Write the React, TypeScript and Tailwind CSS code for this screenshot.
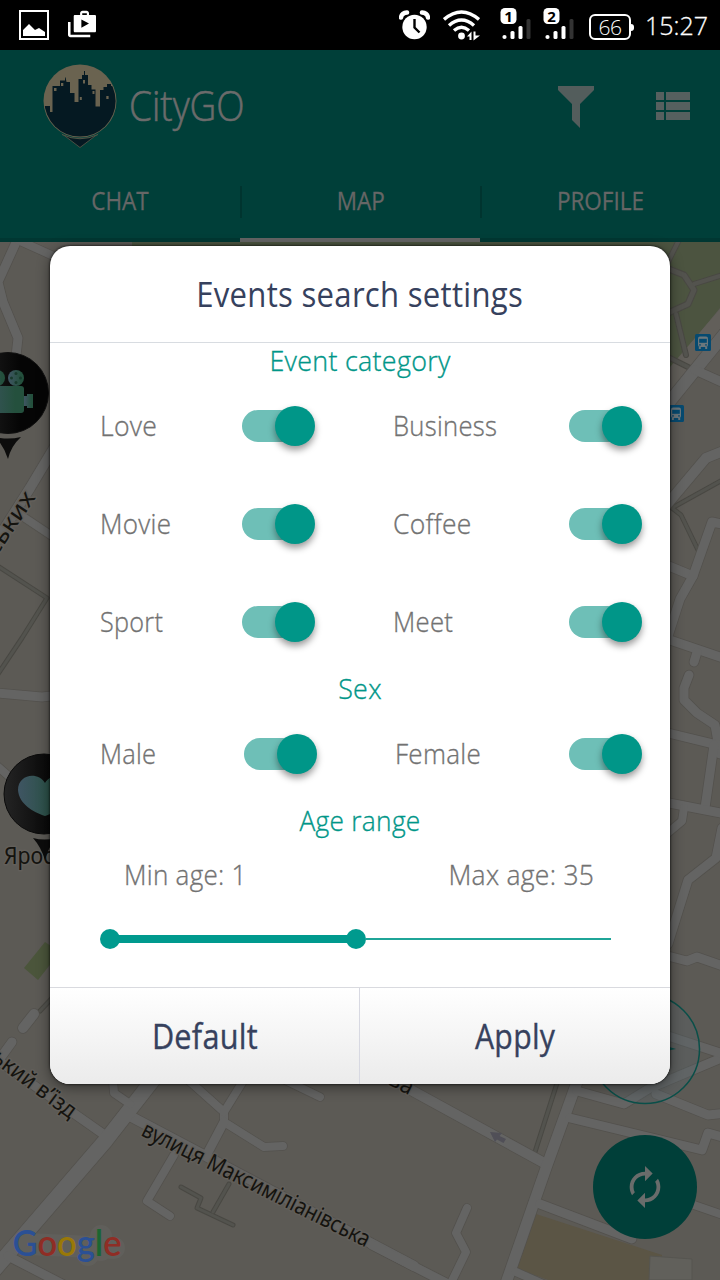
import { MdAutorenew } from "react-icons/md";

/* ---------- Map ---------- */

const roads: [string, number][] = [
  ["M18 238 L-2 282 L3 302 L18 338 L15 365", 9],
  ["M18 240 L60 259", 8],
  ["M54 448 L30 488 L-6 545", 10],
  ["M22 516 L55 538", 8],
  ["M-4 693 L42 697 L60 695", 9],
  ["M-4 765 L12 779", 8],
  ["M34 1014 L23 1028", 10],
  ["M12 1042 L-4 1064", 9],
  ["M-8 1056 L106 1136", 9],
  ["M126 1114 L414 1266", 10],
  ["M156 1076 L106 1140 L-6 1270", 15],
  ["M113 1080 L114 1093 L130 1104", 8],
  ["M186 1078 L224 1112 L224 1122 L264 1147 L283 1146", 8],
  ["M245 1078 L224 1112", 8],
  ["M224 1122 L206 1156", 9],
  ["M174 1155 L147 1201 L170 1216", 8],
  ["M285 1080 L320 1097", 8],
  ["M8 1256 L66 1286", 9],
  ["M400 1084 L546 1164", 10],
  ["M577 1082 L546 1168 L505 1286", 11],
  ["M577 1091 L624 1104 L650 1088 L726 1056", 9],
  ["M656 1094 L708 1115 L726 1113", 9],
  ["M570 1118 L702 1150 L708 1133 L726 1138", 9],
  ["M668 1036 L726 1055", 9],
  ["M540 1204 L632 1239", 9],
  ["M694 1205 L726 1216", 8],
  ["M372 1245 L454 1287", 9],
  ["M467 1208 L456 1233 L466 1252 L450 1285", 8],
  ["M516 1272 L550 1287", 8],
  ["M726 332 L666 406", 12],
  ["M695 370 L726 384", 9],
  ["M664 508 L706 458 L726 450", 10],
  ["M664 564 L693 576", 9],
  ["M726 525 L712 522 L693 576 L680 599 L668 636", 9],
  ["M664 638 L726 659", 9],
  ["M697 652 L694 662", 9],
  ["M689 675 L684 688 L684 700 L697 713 L715 725 L720 754", 9],
  ["M664 732 L726 747", 9],
  ["M714 745 L705 808", 9],
  ["M664 802 L726 814", 9],
  ["M684 808 L682 821 L664 836", 8],
  ["M722 828 L716 858 L688 880 L668 944", 9],
  ["M664 955 L687 961 L697 957 L726 967", 9],
];

const paths: [string, number][] = [
  ["M-4 565 L47 598 L22 638 L-6 680", 4],
  ["M54 996 L40 1011", 4],
  ["M181 1187 L201 1198 L197 1208 L233 1225", 4],
  ["M229 1184 L213 1212", 4],
  ["M558 1080 L535 1152", 4],
  ["M726 478 L672 508 L681 515 L698 550", 4],
  ["M666 268 L684 275 L694 290 L688 304 L666 314", 6],
  ["M694 284 L726 274", 5],
  ["M680 238 L668 262", 5],
  ["M676 314 L686 355", 5],
  ["M664 355 L692 369", 5],
];

function BusStop({ x, y }: { x: number; y: number }) {
  return (
    <g transform={`translate(${x} ${y})`}>
      <rect width="16" height="17" rx="1.5" fill="#064a70" />
      <rect x="3" y="2.5" width="10" height="10.5" rx="2" fill="#6c777c" />
      <rect x="4.2" y="4.8" width="7.6" height="4" fill="#064a70" />
      <rect x="4.2" y="10.2" width="1.6" height="1.4" fill="#064a70" />
      <rect x="10.2" y="10.2" width="1.6" height="1.4" fill="#064a70" />
      <rect x="3.8" y="13" width="2" height="2" fill="#6c777c" />
      <rect x="10.2" y="13" width="2" height="2" fill="#6c777c" />
    </g>
  );
}

function MapView() {
  return (
    <svg className="absolute inset-0" width="720" height="1280" viewBox="0 0 720 1280">
      <defs>
        <linearGradient id="pin" x1="0" x2="1">
          <stop offset="0" stopColor="#242424" />
          <stop offset="0.65" stopColor="#050505" />
        </linearGradient>
        <linearGradient id="mint" x1="0" x2="1">
          <stop offset="0" stopColor="#3f5563" />
          <stop offset="0.8" stopColor="#24503d" />
        </linearGradient>
      </defs>
      <rect width="720" height="1280" fill="#5c5a55" />
      <path d="M132 240 H720 V308 L664 376 V250 H132 Z" fill="#4c5440" />
      <path d="M664 374 L726 302 V340 L664 414 Z" fill="#625f5a" />
      <path d="M24 968 L45 942 L60 952 L38 980 Z" fill="#4b553b" />
      <path d="M536 1214 L662 1255 L660 1280 H548 L516 1268 Z" fill="#5b5545" />
      <g fill="none" strokeLinejoin="round" strokeLinecap="round">
        {paths.map(([d, w]) => <path key={d} d={d} stroke="#494843" strokeWidth={w + 1} />)}
        {paths.map(([d, w]) => <path key={d} d={d} stroke="#53534e" strokeWidth={w - 1} />)}
        {roads.map(([d, w]) => <path key={d} d={d} stroke="#53514d" strokeWidth={w + 1.5} />)}
        {roads.map(([d, w]) => <path key={d} d={d} stroke="#646463" strokeWidth={w} />)}
      </g>
      <path d="M650 1256 L692 1259 V1280 H649 Z" fill="#61605b" stroke="#565550" />
      <path d="M490 1132 L502 1133 L499.500 1136 L506 1139 L503.500 1143 L497 1139.500 L495 1142 Z" fill="#504f57" />
      <BusStop x={695} y={334} />
      <BusStop x={668} y={405} />

      <circle cx="8" cy="393" r="40.500" fill="url(#pin)" stroke="#111" />
      <path d="M-5 437 Q8 440 21 437 Q11 446 8 459 Q4 446 -5 437" fill="#0c0c0c" />
      <g fill="url(#mint)">
        <circle cx="-3" cy="378" r="8" />
        <circle cx="16" cy="378" r="8" />
        <rect x="-20" y="386" width="44" height="27" rx="3" />
        <path d="M24 396 H27 V394 H33 V408 H27 V406 H24 Z" />
      </g>
      <g fill="#183a2c">
        <circle cx="16" cy="373.500" r="1.500" />
        <circle cx="16" cy="382.500" r="1.500" />
        <circle cx="11.500" cy="378" r="1.500" />
        <circle cx="20.500" cy="378" r="1.500" />
      </g>

      <g fontFamily="'Noto Sans', 'Open Sans', sans-serif" fontSize="23" fontWeight="450" fill="#14130f" stroke="#625f5a" strokeWidth="3" paintOrder="stroke" strokeLinejoin="round">
        <text transform="translate(-12 569) rotate(-56)" textLength="86" lengthAdjust="spacingAndGlyphs">вських</text>
        <text x="4" y="864" textLength="74" lengthAdjust="spacingAndGlyphs">Яросла</text>
        <text transform="translate(-9 1061) rotate(36.500)" textLength="98" lengthAdjust="spacingAndGlyphs">ький в’їзд</text>
        <text transform="translate(140 1135) rotate(26.500)" textLength="252" lengthAdjust="spacingAndGlyphs">вулиця Максиміліанівська</text>
        <text transform="translate(387 1084) rotate(27)" textLength="25" lengthAdjust="spacingAndGlyphs">ва</text>
      </g>

      <circle cx="44" cy="794" r="40" fill="url(#pin)" stroke="#0a0a0a" />
      <path d="M33 838 Q44 841 57 838 Q48 847 45 860 Q41 847 33 838" fill="#0c0c0c" />
      <path d="M45 783 C38 771 18 774 18 790 C19 804 33 812 45 816 C57 812 71 804 72 790 C72 774 52 771 45 783" fill="url(#mint)" />

      <circle cx="645" cy="1049" r="54.500" fill="#58656a" fillOpacity="0.35" stroke="#0a4f49" strokeWidth="1.500" />
      <path d="M666 1046 L676 1049 L666 1051 Z" fill="#0a4f49" />

      <path d="M27 1244 L114 1248 M88 1250 V1255 M101 1236 V1250" stroke="#605f5b" strokeWidth="22" strokeLinecap="round" fill="none" />
      <text x="12.500" y="1256" fontFamily="Lato, sans-serif" fontWeight="600" fontSize="36" textLength="109" lengthAdjust="spacingAndGlyphs">
        <tspan fill="#2b5095">G</tspan>
        <tspan fill="#8f2d25">o</tspan>
        <tspan fill="#997808">o</tspan>
        <tspan fill="#2b5095">g</tspan>
        <tspan fill="#1c6631">l</tspan>
        <tspan fill="#8f2d25">e</tspan>
      </text>
    </svg>
  );
}

/* ---------- Status bar ---------- */

function SimSignal({ n }: { n: string }) {
  return (
    <svg width="31" height="34" viewBox="0 0 31 34" className="shrink-0">
      <rect x="0.500" y="1" width="16" height="16" rx="4.500" fill="#fff" />
      <text x="8.500" y="14.500" textAnchor="middle" fontFamily="'Open Sans', sans-serif" fontWeight="700" fontSize="15" fill="#000">{n}</text>
      <circle cx="4.500" cy="30" r="2.100" fill="#fff" />
      <rect x="10.500" y="24" width="4" height="8" rx="1.500" fill="#fff" />
      <rect x="18.500" y="19" width="4" height="13" rx="1.500" fill="#fff" />
      <rect x="26.500" y="12" width="4" height="20" rx="1.500" fill="#333" />
    </svg>
  );
}

function StatusBar() {
  return (
    <div className="flex h-[50px] items-center bg-black pl-[19px] pr-[10px] text-white">
      <svg width="30" height="30" viewBox="0 0 30 30">
        <rect x="1" y="1" width="28" height="28" fill="none" stroke="#fff" strokeWidth="2" />
        <path d="M4 26 V20 L10 14 L16 20 L20 18 L26 22 V26 Z" fill="#fff" />
      </svg>
      <svg width="28" height="28" viewBox="1 1 22 21" className="-mt-[2px] ml-[19px]">
        <path fill="#fff" fillRule="evenodd" d="M3 10H1v10c0 1.110.890 2 2 2h15.500v-2H3zM17.500 4V3c0-1.110-.890-2-2-2h-3c-1.110 0-2 .890-2 2v1.500H6.500c-.600 0-1 .400-1 1V17c0 .600.400 1 1 1H22c.600 0 1-.400 1-1V5.500c0-.600-.400-1-1-1h-4.500zM12.200 3h3.600v1.500h-3.600zM11.500 14.500v-6.500l6 3.200z" />
      </svg>
      <div className="ml-auto flex items-center">
        <svg width="31" height="30" viewBox="0 0 31 30" className="shrink-0">
          <path d="M2 7.500 Q2.500 3 8 2.500" stroke="#fff" strokeWidth="4.500" fill="none" strokeLinecap="round" />
          <path d="M29 7.500 Q28.500 3 23 2.500" stroke="#fff" strokeWidth="4.500" fill="none" strokeLinecap="round" />
          <circle cx="15.500" cy="17" r="13.500" fill="#000" />
          <circle cx="15.500" cy="17" r="12.200" fill="#fff" />
          <path d="M15.500 9 V17.500 L20.500 22.500" stroke="#000" strokeWidth="2.400" fill="none" />
        </svg>
        <svg width="37" height="31" viewBox="0 0 37 31" className="ml-[13px] shrink-0">
          <g fill="none" stroke="#fff" strokeWidth="3.400">
            <path d="M1 9.500 Q18.500 -5.500 36 9.500" />
            <path d="M6 15.500 Q18.500 4.500 31 15.500" />
            <path d="M11 20.500 Q18.500 14 26 20.500" />
          </g>
          <circle cx="18.500" cy="26" r="3.400" fill="#fff" />
          <path d="M24 26.500 L28.500 21.500 V30 H26.500 V26.500 Z M30.500 21.500 H32.500 V25.500 H37 L30.500 30.500 Z" fill="#fff" />
        </svg>
        <div className="ml-[20px] -mt-[2px]"><SimSignal n="1" /></div>
        <div className="ml-[12px] -mt-[2px]"><SimSignal n="2" /></div>
        <div className="ml-[15px] mt-1 flex items-center">
          <div className="flex h-[26px] w-[42px] items-center justify-center rounded-[6px] border-2 border-white text-[21px] font-light leading-none tracking-[-0.500px]">66</div>
          <div className="h-[7px] w-[3px] rounded-r bg-white" />
        </div>
        <span className="ml-[11px] w-[65px] whitespace-nowrap text-[25px] font-light leading-none [-webkit-text-stroke:0.300px]">15:27</span>
      </div>
    </div>
  );
}

/* ---------- App bar ---------- */

function Logo() {
  return (
    <svg width="76" height="86" viewBox="42 63 76 86" className="shrink-0">
      <path d="M61 133 L80 147.500 L99 133 Z" fill="#051922" stroke="#5d5747" strokeWidth="0.800" />
      <circle cx="80" cy="101" r="38" fill="#003f39" />
      <path d="M62 134.500 Q80 143 98 134.500" fill="none" stroke="#5d5747" strokeWidth="0.900" />
      <clipPath id="disc"><circle cx="80" cy="101" r="35.600" /></clipPath>
      <circle cx="80" cy="101" r="36.500" fill="#6a6350" />
      <path clipPath="url(#disc)" fill="#051922" d="M40 106 H50 V112 H52.500 V86 H60 V80.500 H65 V78 L65.500 77 L66.500 82 H70 V93 H74.500 V102 H78.500 V79 H82 V75 H84 V71 H85 V75 H88 V85 H91.500 V89.500 H95.500 V106.500 H100 V90 H103.500 V87 H107 V84 H111 V86 H120 V140 H40 Z" />
      <g fill="#6a6350">
        <rect x="54" y="88" width="2.500" height="3" />
        <rect x="61" y="83" width="2.300" height="3" />
        <rect x="83" y="80" width="2" height="3.500" />
        <rect x="79.800" y="97" width="2" height="3" />
        <rect x="92.500" y="91" width="2" height="3" />
        <rect x="106.300" y="96" width="2.300" height="3" />
      </g>
    </svg>
  );
}

function Tab({ label, active, divider }: { label: string; active?: boolean; divider?: boolean }) {
  return (
    <div className={active ? "flex h-20 w-60 items-center border-b-4 border-[#646464]" : "flex h-20 w-60 items-center border-b-4 border-[#003732]"}>
      <div className={divider ? "mt-1 flex h-8 flex-1 items-center justify-center border-l-2 border-[#00342f]" : "mt-1 flex h-8 flex-1 items-center justify-center"}>
        <span className="scale-x-[0.900] pb-1 pr-[1px] text-[25px] font-normal leading-none text-[#666666] [-webkit-text-stroke:0.300px]">{label}</span>
      </div>
    </div>
  );
}

function AppBar() {
  return (
    <header className="bg-[#003f39]">
      <div className="flex h-[112px] items-center pl-[42px] pr-[30px]">
        <Logo />
        <span className="ml-[11px] w-[120px] origin-left scale-x-[0.880] whitespace-nowrap pb-[2px] text-[42px] font-light leading-none text-[#6b6b6b] [-webkit-text-stroke:0.600px]">CityGO</span>
        <svg width="36" height="42" viewBox="0 0 36 42" className="ml-auto mt-[2px]">
          <path d="M0 0 H36 V4 L22 18 V42 L14 34 V18 L0 4 Z" fill="#535d5c" />
        </svg>
        <svg width="34" height="28" viewBox="0 0 34 28" className="ml-[62px]">
          <path d="M0 0H8V8H0ZM10 0H34V8H10ZM0 10H8V18H0ZM10 10H34V18H10ZM0 20H8V28H0ZM10 20H34V28H10Z" fill="#56605f" />
        </svg>
      </div>
      <nav className="flex">
        <Tab label="CHAT" />
        <Tab label="MAP" active divider />
        <Tab label="PROFILE" divider />
      </nav>
    </header>
  );
}

/* ---------- Dialog ---------- */

function Toggle() {
  return (
    <button role="switch" aria-checked="true" className="flex h-10 w-[73px] shrink-0 items-center">
      <span className="h-8 w-[53px] rounded-l-full bg-[#6ebfb7]" />
      <span className="-ml-5 size-10 shrink-0 rounded-full bg-[#009688] shadow-[0_4px_7px_rgba(0,0,0,0.400)]" />
    </button>
  );
}

type Item = { text: string; fit: string };

function OptionRow({ left, right, wide }: { left: Item; right: Item; wide?: boolean }) {
  return (
    <div className="flex h-[98px] items-center pl-[50px] text-[#727272]">
      <span className={`${wide ? "w-[144px]" : "w-[142px]"} origin-left pb-[2px] ${left.fit}`}>{left.text}</span>
      <Toggle />
      <span className={`${wide ? "ml-[78px] w-[174px]" : "ml-[78px] w-[176px]"} origin-left pb-[2px] ${right.fit}`}>{right.text}</span>
      <Toggle />
    </div>
  );
}

function Heading({ children, fit }: { children: string; fit: string }) {
  return <h3 className={`flex h-[34px] items-center justify-center pb-px text-[#009688] ${fit}`}>{children}</h3>;
}

function SettingsDialog() {
  return (
    <div role="dialog" className="absolute left-[50px] top-[246px] flex h-[838px] w-[620px] flex-col overflow-hidden rounded-[20px] bg-white text-[28px] font-light leading-none tracking-[0.300px] [-webkit-text-stroke:0.350px] shadow-[0_0_2px_1px_rgba(0,0,0,0.450),0_3px_14px_rgba(0,0,0,0.450)]">
      <h2 className="flex h-[97px] items-center justify-center border-b border-[#d8dce1] text-[34px] font-normal text-[#36415d] [-webkit-text-stroke:0]">
        <span className="scale-x-[0.915]">Events search settings</span>
      </h2>
      <Heading fit="scale-x-[0.960]">Event category</Heading>
      <OptionRow left={{ text: "Love", fit: "scale-x-[0.950]" }} right={{ text: "Business", fit: "scale-x-[0.915]" }} />
      <OptionRow left={{ text: "Movie", fit: "scale-x-[0.930]" }} right={{ text: "Coffee", fit: "scale-x-[0.945]" }} />
      <OptionRow left={{ text: "Sport", fit: "scale-x-[0.900]" }} right={{ text: "Meet", fit: "scale-x-[0.920]" }} />
      <Heading fit="scale-x-[0.960]">Sex</Heading>
      <OptionRow wide left={{ text: "Male", fit: "scale-x-[0.910]" }} right={{ text: "Female", fit: "scale-x-[0.930]" }} />
      <Heading fit="scale-x-[0.940]">Age range</Heading>
      <div className="flex h-[74px] items-center justify-between pl-[74px] pr-[76px] text-[#727272]">
        <span className="origin-left scale-x-[0.930] pb-px">Min age: 1</span>
        <span className="origin-right scale-x-[0.945] pb-px">Max age: 35</span>
      </div>
      <div className="flex h-[56px] items-center pl-[50px]">
        <span className="size-5 rounded-full bg-[#009a8e]" />
        <span className="-mx-1 h-2 w-[234px] bg-[#009a8e]" />
        <span className="size-5 rounded-full bg-[#009a8e]" />
        <span className="h-[2px] w-[245px] bg-[#1fa598]" />
      </div>
      <div className="mt-auto flex h-[97px] border-t border-[#d9dadf] bg-linear-to-b from-white to-[#ebebeb] text-[34px] font-normal text-[#36415d]">
        <button className="flex w-[310px] items-center justify-center border-r border-[#d8d9e2] pb-px">
          <span className="scale-x-[0.900]">Default</span>
        </button>
        <button className="flex flex-1 items-center justify-center pb-px">
          <span className="scale-x-[0.890]">Apply</span>
        </button>
      </div>
    </div>
  );
}

export default function App() {
  return (
    <div className="relative h-[1280px] w-[720px] overflow-hidden bg-[#5c5a55] font-['Open_Sans','Noto_Sans',sans-serif]">
      <MapView />
      <div className="relative">
        <StatusBar />
        <AppBar />
      </div>
      <button className="absolute left-[593px] top-[1135px] flex size-[104px] items-center justify-center rounded-full bg-[#003f39] text-[#696c6b]">
        <MdAutorenew size={46} />
      </button>
      <SettingsDialog />
    </div>
  );
}
